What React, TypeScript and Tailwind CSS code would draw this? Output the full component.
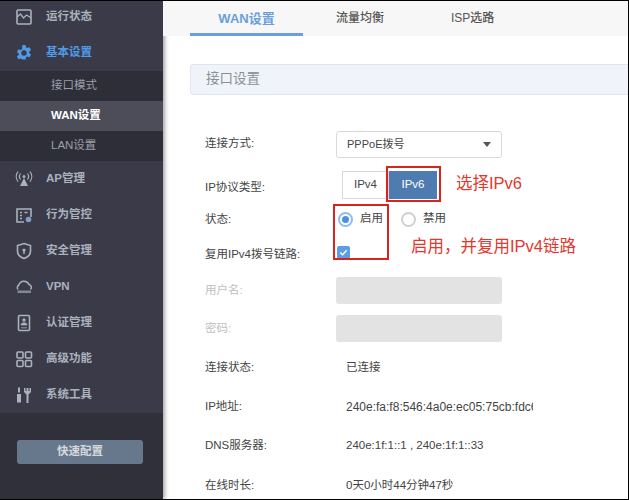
const font = { fontFamily: '"Liberation Sans", "Noto Sans CJK SC", sans-serif' };

const icons: Record<string, React.ReactNode> = {
  status: (
    <>
      <rect x="2" y="2" width="14" height="14" rx="1" fill="none" stroke="currentColor" strokeWidth="1.6" />
      <path d="M2 9l3.5-3 3 4 3-3 4 2.5" fill="none" stroke="currentColor" strokeWidth="1.3" />
    </>
  ),
  gear: (
    <path
      fillRule="evenodd"
      d="M7.4 1h3.2l.4 2.3 1.3.7 2.2-.8 1.6 2.8-1.8 1.5v1.5l1.8 1.5-1.6 2.8-2.2-.8-1.3.7-.4 2.3H7.4L7 15.200l-1.300-.7-2.200.8-1.600-2.800 1.800-1.500V9.500L1.900 8 3.500 5.200l2.200.8L7 5.300zM9 6.300a2.700 2.700 0 1 0 0 5.400 2.700 2.700 0 0 0 0-5.400z"
      fill="currentColor"
    />
  ),
  ap: (
    <>
      <path d="M9 8l4 8H5z" fill="currentColor" />
      <circle cx="9" cy="6.500" r="1.500" fill="currentColor" />
      <path d="M5.500 3.500a5 5 0 0 0 0 6M3 1.500a8 8 0 0 0 0 10M12.500 3.500a5 5 0 0 1 0 6M15 1.500a8 8 0 0 1 0 10" fill="none" stroke="currentColor" strokeWidth="1.200" />
    </>
  ),
  behavior: (
    <>
      <path d="M9 16H2V3h14v8" fill="none" stroke="currentColor" strokeWidth="1.600" />
      <path d="M5 6.500h2M5 9.500h2M5 12.500h2M9.500 6.500h3" stroke="currentColor" strokeWidth="1.500" />
      <circle cx="13.500" cy="13.500" r="2.800" fill="#7f9fc4" />
    </>
  ),
  shield: (
    <>
      <path d="M9 1.500l6.500 2v6c0 3.500-3 5.700-6.500 7-3.500-1.300-6.500-3.500-6.500-7v-6z" fill="none" stroke="currentColor" strokeWidth="1.600" />
      <circle cx="9" cy="8" r="1.600" fill="currentColor" />
      <path d="M9 9v3" stroke="currentColor" strokeWidth="1.400" />
    </>
  ),
  vpn: (
    <>
      <path d="M3 11.500a3 3 0 0 1 .8-4.500A5.500 5.500 0 0 1 14 6.500a3 3 0 0 1 1.500 5" fill="none" stroke="currentColor" strokeWidth="1.500" />
      <path d="M2.500 12.500h13.500v2.500H2.500z" fill="currentColor" opacity="0.650" />
    </>
  ),
  auth: (
    <>
      <rect x="3.500" y="1.500" width="11" height="15" rx="1" fill="none" stroke="currentColor" strokeWidth="1.600" />
      <circle cx="9" cy="6" r="1.700" fill="currentColor" />
      <path d="M6 11c0-3 6-3 6 0zM6 13.800h6" fill="currentColor" stroke="currentColor" strokeWidth="0.800" />
    </>
  ),
  grid: (
    <>
      <rect x="2" y="2" width="6" height="6" rx="1" fill="none" stroke="currentColor" strokeWidth="1.600" />
      <rect x="10.500" y="2" width="6" height="6" rx="1" fill="none" stroke="currentColor" strokeWidth="1.600" />
      <rect x="2" y="10.500" width="6" height="6" rx="1" fill="none" stroke="currentColor" strokeWidth="1.600" />
      <rect x="10.500" y="10.500" width="6" height="6" rx="1" fill="none" stroke="currentColor" strokeWidth="1.600" />
    </>
  ),
  tools: (
    <>
      <path d="M3 1.500h2v5H3zM2 8h4v8.500H2z" fill="currentColor" />
      <path d="M9 2v4l2.500 2.500V17h2V8.500L16 6V2l-1.500 0v3h-1V2h-2v3h-1V2z" fill="currentColor" />
    </>
  ),
};

function NavIcon({ name }: { name: string }) {
  return (
    <svg viewBox="0 0 18 18" className="w-[18px] h-[18px] shrink-0">
      {icons[name]}
    </svg>
  );
}

function NavItem({ icon, label, active }: { icon: string; label: string; active?: boolean }) {
  return (
    <div className={`flex items-center h-9 pl-[15px] gap-[13px] ${active ? 'text-[#4f9be8]' : 'text-[#aab2bd]'}`}>
      <NavIcon name={icon} />
      <span className="text-[11.5px] font-bold">{label}</span>
    </div>
  );
}

function SubItem({ label, active }: { label: string; active?: boolean }) {
  return (
    <div className={`flex items-center h-[30px] pl-[51px] text-[11.5px] ${active ? 'bg-[#4d4d5a] text-white font-bold' : 'text-[#9a9fa8]'}`}>
      {label}
    </div>
  );
}

function Row({ label, height, muted, labelClass, children }: { label: string; height: string; muted?: boolean; labelClass?: string; children?: React.ReactNode }) {
  return (
    <div className={`flex items-center ${height}`}>
      <span className={`w-[131px] shrink-0 text-[11.5px] ${muted ? 'text-[#c0c0c0]' : 'text-[#444]'} ${labelClass ?? ''}`}>{label}</span>
      {children}
    </div>
  );
}

function Value({ size, children }: { size?: string; children: React.ReactNode }) {
  return <span className={`block w-[187px] ml-[10px] overflow-hidden whitespace-nowrap text-[#444] ${size ?? 'text-[11.5px]'}`}>{children}</span>;
}

export default function App() {
  return (
    <div style={font} className="relative flex w-[629px] h-[500px] overflow-hidden bg-white border-t border-b border-r border-black">
      <aside className="flex flex-col w-[163px] shrink-0 bg-[#3a3a48] shadow-[2px_0_4px_rgba(0,0,0,0.35)]">
        <div className="-mt-[2px]">
          <NavItem icon="status" label="运行状态" />
          <NavItem icon="gear" label="基本设置" active />
          <div className="bg-[#2e2e39]">
            <SubItem label="接口模式" />
            <SubItem label="WAN设置" active />
            <SubItem label="LAN设置" />
          </div>
          <NavItem icon="ap" label="AP管理" />
          <NavItem icon="behavior" label="行为管控" />
          <NavItem icon="shield" label="安全管理" />
          <NavItem icon="vpn" label="VPN" />
          <NavItem icon="auth" label="认证管理" />
          <NavItem icon="grid" label="高级功能" />
          <NavItem icon="tools" label="系统工具" />
        </div>
        <div className="flex-1 pt-[27px] pl-[17px] bg-[#30303b]">
          <div className="flex items-center justify-center w-[126px] h-6 rounded-[3px] bg-[#67788c] text-[11.5px] font-bold text-[#d5d9de]">
            快速配置
          </div>
        </div>
      </aside>

      <main className="flex-1 min-w-0">
        <div className="flex h-[35px] pl-[27px] bg-[#f7f7f7]">
          <div className="flex justify-center w-[113px] h-[35px] pt-[8px] border-b-[3px] border-[#6a9fdc] text-[13px] font-bold text-[#6a9fdc]">WAN设置</div>
          <div className="w-[148px] pt-[9px] pl-[33px] text-xs font-medium text-[#555]">流量均衡</div>
          <div className="pt-[9px] text-xs font-medium text-[#555]">ISP选路</div>
        </div>

        <div className="pl-[27px]">
          <div className="flex items-center h-[31px] mt-[28px] pl-[15px] rounded-l-[4px] border border-r-0 border-[#dfe6ef] bg-[#f0f4fa] text-[13.5px] text-[#8a8f96]">
            接口设置
          </div>

          <div className="pl-[15px] pt-[35px]">
            <Row label="连接方式:" height="h-[28px]">
              <div className="flex items-center justify-between w-[166px] h-[27px] pl-[10px] pr-[10px] rounded-[3px] border border-[#d9d9d9] text-[11px] text-[#444]">
                PPPoE拨号
                <span className="w-0 h-0 border-x-[4px] border-x-transparent border-t-[5px] border-t-[#555]" />
              </div>
            </Row>
            <Row label="IP协议类型:" height="h-[28px] mt-[13px]" labelClass="pt-[5px]">
              <div className="flex ml-[6px] h-[28px] text-[11.5px]">
                <span className="flex items-center justify-center w-[47px] border border-[#d9d9d9] text-[#444]">IPv4</span>
                <span className="flex items-center justify-center w-[48px] bg-[#4f7cb0] text-white">IPv6</span>
              </div>
            </Row>
            <Row label="状态:" height="h-[28px] mt-[6px]" labelClass="pt-[2px]">
              <div className="flex items-center text-[11.5px] text-[#444]">
                <span className="flex items-center justify-center w-[15px] h-[15px] ml-[2px] rounded-full border-2 border-[#8dbdf0]">
                  <span className="w-[7px] h-[7px] rounded-full bg-[#4a90e2]" />
                </span>
                <span className="ml-[7px]">启用</span>
                <span className="w-[15px] h-[15px] ml-[18px] rounded-full border-2 border-[#d0d0d0]" />
                <span className="ml-[7px]">禁用</span>
              </div>
            </Row>
            <Row label="复用IPv4拨号链路:" height="h-[28px] mt-[7px]" labelClass="pt-[2px]">
              <span className="flex items-center justify-center w-[13px] h-[13px] ml-px -mt-[4px] rounded-[2px] bg-[#5b9ee6]">
                <svg viewBox="0 0 12 12" className="w-[11px] h-[11px]">
                  <path d="M2.500 6l2.500 2.500 4.500-5" fill="none" stroke="#fff" strokeWidth="1.500" />
                </svg>
              </span>
            </Row>
            <Row label="用户名:" height="h-[27px] mt-[9px]" muted>
              <span className="w-[166px] h-[27px] rounded-[3px] bg-[#e3e3e3]" />
            </Row>
            <Row label="密码:" height="h-[27px] mt-[11px]" muted>
              <span className="w-[166px] h-[27px] rounded-[3px] bg-[#e3e3e3]" />
            </Row>
            <Row label="连接状态:" height="h-[20px] mt-[16px]"><Value>已连接</Value></Row>
            <Row label="IP地址:" height="h-[20px] mt-[19px]"><Value size="text-xs">240e:fa:f8:546:4a0e:ec05:75cb:fdc6</Value></Row>
            <Row label="DNS服务器:" height="h-[20px] mt-[19px]"><Value>240e:1f:1::1 , 240e:1f:1::33</Value></Row>
            <Row label="在线时长:" height="h-[20px] mt-[20px]"><Value>0天0小时44分钟47秒</Value></Row>
          </div>
        </div>
      </main>

      {/* red annotations on top of the screenshot */}
      <div className="absolute left-[386px] top-[165px] w-[55px] h-[36px] border-2 border-[#d8231f]" />
      <div className="absolute left-[333px] top-[203px] w-[56px] h-[56px] border-2 border-[#d8231f]" />
      <span className="absolute left-[456px] top-[170px] text-[16.5px] leading-6 text-[#e2382e]">选择IPv6</span>
      <span className="absolute left-[411px] top-[233px] text-[16.5px] leading-6 text-[#e2382e]">启用，并复用IPv4链路</span>
    </div>
  );
}
